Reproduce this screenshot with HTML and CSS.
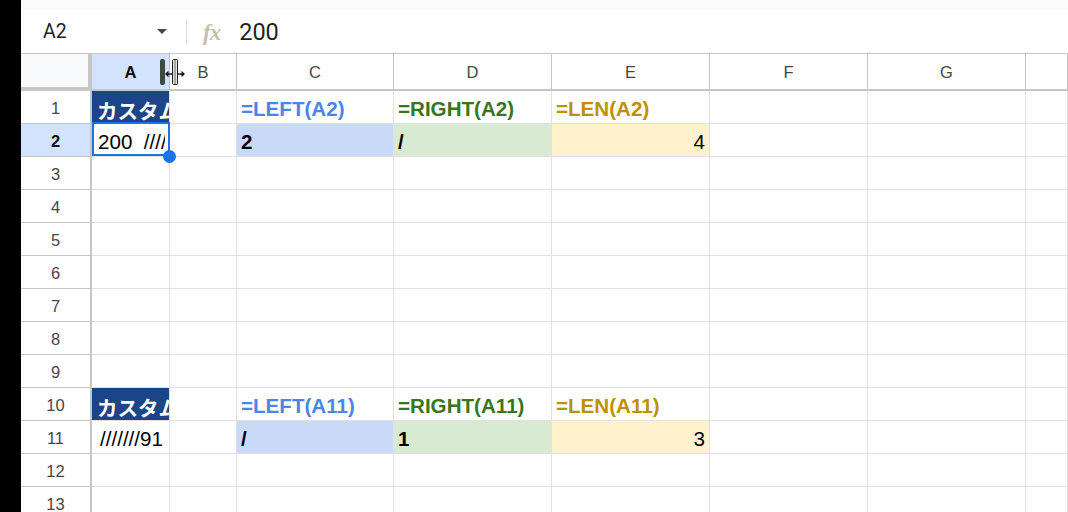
FILE: index.html
```html
<!DOCTYPE html>
<html lang="ja">
<head>
<meta charset="utf-8">
<title>シート</title>
<link rel="stylesheet" href="styles.css">
</head>
<body>
<div class="app">
  <div class="edge"></div>
  <div class="main">
    <div class="topstrip"></div>
    <div class="fbar">
      <div class="namebox"><span class="ref">A2</span><span class="caret"></span></div>
      <div class="fsep"></div>
      <span class="fx">fx</span>
      <span class="fval">200</span>
    </div>

    <div class="sheet">
      <!-- header row -->
      <div class="corner"></div>
      <div class="ch ch-active">A
        <span class="resize-bar"></span>
        <svg class="resize-cursor" width="22" height="28" viewBox="0 0 22 28">
          <line x1="8" y1="16" x2="3" y2="16" stroke="#111" stroke-width="1.4"/>
          <polygon points="1,16 4.5,12.8 4.5,19.2" fill="#111"/>
          <line x1="13.5" y1="16" x2="18.5" y2="16" stroke="#111" stroke-width="1.4"/>
          <polygon points="21,16 17.5,12.8 17.5,19.2" fill="#111"/>
          <rect x="8.5" y="1.5" width="5" height="25" rx="1" fill="#e4e4e4" stroke="#222" stroke-width="1"/>
          <line x1="11" y1="2" x2="11" y2="26" stroke="#666" stroke-width="1"/>
        </svg>
      </div>
      <div class="ch">B</div>
      <div class="ch">C</div>
      <div class="ch">D</div>
      <div class="ch">E</div>
      <div class="ch">F</div>
      <div class="ch">G</div>
      <div class="ch"></div>

      <!-- row 1 -->
      <div class="rh">1</div>
      <div class="c title">カスタム</div>
      <div class="c"></div>
      <div class="c f-left">=LEFT(A2)</div>
      <div class="c f-right">=RIGHT(A2)</div>
      <div class="c f-len">=LEN(A2)</div>
      <div class="c"></div><div class="c"></div><div class="c"></div>

      <!-- row 2 -->
      <div class="rh rh-active">2</div>
      <div class="c active"><span class="clip">200&nbsp;&nbsp;////</span><span class="sel"><span class="handle"></span></span></div>
      <div class="c"></div>
      <div class="c v-left">2</div>
      <div class="c v-right">/</div>
      <div class="c v-len">4</div>
      <div class="c"></div><div class="c"></div><div class="c"></div>

      <!-- rows 3-9 -->
      <div class="rh">3</div><div class="c"></div><div class="c"></div><div class="c"></div><div class="c"></div><div class="c"></div><div class="c"></div><div class="c"></div><div class="c"></div>
      <div class="rh">4</div><div class="c"></div><div class="c"></div><div class="c"></div><div class="c"></div><div class="c"></div><div class="c"></div><div class="c"></div><div class="c"></div>
      <div class="rh">5</div><div class="c"></div><div class="c"></div><div class="c"></div><div class="c"></div><div class="c"></div><div class="c"></div><div class="c"></div><div class="c"></div>
      <div class="rh">6</div><div class="c"></div><div class="c"></div><div class="c"></div><div class="c"></div><div class="c"></div><div class="c"></div><div class="c"></div><div class="c"></div>
      <div class="rh">7</div><div class="c"></div><div class="c"></div><div class="c"></div><div class="c"></div><div class="c"></div><div class="c"></div><div class="c"></div><div class="c"></div>
      <div class="rh">8</div><div class="c"></div><div class="c"></div><div class="c"></div><div class="c"></div><div class="c"></div><div class="c"></div><div class="c"></div><div class="c"></div>
      <div class="rh">9</div><div class="c"></div><div class="c"></div><div class="c"></div><div class="c"></div><div class="c"></div><div class="c"></div><div class="c"></div><div class="c"></div>

      <!-- row 10 -->
      <div class="rh">10</div>
      <div class="c title">カスタム</div>
      <div class="c"></div>
      <div class="c f-left">=LEFT(A11)</div>
      <div class="c f-right">=RIGHT(A11)</div>
      <div class="c f-len">=LEN(A11)</div>
      <div class="c"></div><div class="c"></div><div class="c"></div>

      <!-- row 11 -->
      <div class="rh">11</div>
      <div class="c plain">///////91</div>
      <div class="c"></div>
      <div class="c v-left">/</div>
      <div class="c v-right">1</div>
      <div class="c v-len">3</div>
      <div class="c"></div><div class="c"></div><div class="c"></div>

      <!-- rows 12-13 -->
      <div class="rh">12</div><div class="c"></div><div class="c"></div><div class="c"></div><div class="c"></div><div class="c"></div><div class="c"></div><div class="c"></div><div class="c"></div>
      <div class="rh">13</div><div class="c"></div><div class="c"></div><div class="c"></div><div class="c"></div><div class="c"></div><div class="c"></div><div class="c"></div><div class="c"></div>
    </div>
  </div>
</div>
</body>
</html>
```

FILE: styles.css
```css
* { box-sizing: border-box; }

html, body {
  margin: 0;
  padding: 0;
  background: #fff;
  overflow: hidden;
}

.app {
  display: flex;
  width: 1068px;
  height: 512px;
  overflow: hidden;
}

.edge {
  width: 21px;
  flex: none;
  background: #000;
}

.main {
  flex: 1;
  display: flex;
  flex-direction: column;
  min-width: 0;
}

.topstrip {
  height: 10px;
  background: #f9fbfd;
  flex: none;
}

/* formula bar */
.fbar {
  height: 44px;
  flex: none;
  display: flex;
  align-items: center;
  border-bottom: 1px solid #c4c7c5;
  font-family: Roboto, "Liberation Sans", Arial, sans-serif;
  color: #1f1f1f;
}

.namebox {
  width: 146px;
  padding-left: 22px;
  display: flex;
  align-items: center;
}

.ref {
  font-size: 19.5px;
}

.caret {
  margin-left: auto;
  width: 0;
  height: 0;
  border-left: 5px solid transparent;
  border-right: 5px solid transparent;
  border-top: 5px solid #444746;
}

.fsep {
  width: 1px;
  height: 26px;
  background: #dadce0;
  margin-left: 19px;
}

.fx {
  margin-left: 16px;
  font-family: "Liberation Serif", "DejaVu Serif", serif;
  font-style: italic;
  font-weight: bold;
  font-size: 23px;
  color: #c9bfac;
  letter-spacing: -1px;
  margin-top: 2px;
}

.fval {
  margin-left: 19px;
  font-size: 23.5px;
}

/* grid */
.sheet {
  display: grid;
  grid-template-columns: 71px 78px 67px 157px 158px 158px 158px 158px 1fr;
  grid-template-rows: 37px repeat(13, 33px);
  font-family: "Liberation Sans", Arial, "Noto Sans CJK JP", sans-serif;
}

.corner {
  background: #f8f9fa;
  border-right: 4px solid #c7c7c7;
  border-bottom: 4px solid #c7c7c7;
}

.ch {
  position: relative;
  display: flex;
  align-items: center;
  justify-content: center;
  font-size: 16.5px;
  color: #444746;
  background: #fff;
  border-right: 1px solid #c4c7c5;
  border-bottom: 2px solid #c4c7c5;
  padding-top: 1px;
}

.ch-active {
  background: #d3e3fd;
  color: #0b0b0b;
  font-weight: bold;
}

.resize-bar {
  position: absolute;
  left: 68px;
  top: 5px;
  width: 5px;
  height: 26px;
  border-radius: 2px;
  background: #3d4a3f;
}

.resize-cursor {
  position: absolute;
  left: 72px;
  top: 4px;
  z-index: 3;
}

.rh {
  display: flex;
  align-items: center;
  justify-content: center;
  font-size: 16.5px;
  color: #444746;
  background: #fff;
  border-right: 2px solid #c4c7c5;
  border-bottom: 1px solid #c4c7c5;
  padding-top: 3px;
}

.rh-active {
  background: #d3e3fd;
  color: #0b0b0b;
  font-weight: bold;
}

.c {
  display: flex;
  align-items: flex-end;
  overflow: hidden;
  white-space: nowrap;
  border-right: 1px solid #e1e1e1;
  border-bottom: 1px solid #e1e1e1;
  font-size: 20.6px;
  line-height: 20px;
  padding: 0 4px 4px 4px;
  color: #000;
}

.title {
  background: #1c4587;
  color: #fff;
  font-weight: bold;
  font-family: "Noto Sans CJK JP", sans-serif;
  font-size: 20.5px;
  padding-left: 5px;
  padding-bottom: 3px;
}

.plain {
  padding-left: 8px;
}

.f-left { color: #4a86e8; font-weight: bold; }
.f-right { color: #38761d; font-weight: bold; }
.f-len { color: #bf9000; font-weight: bold; }

.v-left { background: #c9daf8; font-weight: bold; }
.v-right { background: #d9ead3; font-weight: bold; }
.v-len { background: #fff2cc; justify-content: flex-end; }

/* selected cell */
.active {
  position: relative;
  overflow: visible;
  z-index: 2;
  padding-left: 6px;
}

.clip {
  display: block;
  overflow: hidden;
  width: 100%;
}

.sel {
  position: absolute;
  left: 0;
  top: -2px;
  right: -1px;
  bottom: 0;
  border: 2px solid #1a73e8;
}

.handle {
  position: absolute;
  right: -8px;
  bottom: -9px;
  width: 13px;
  height: 13px;
  border-radius: 50%;
  background: #1a73e8;
}
```
